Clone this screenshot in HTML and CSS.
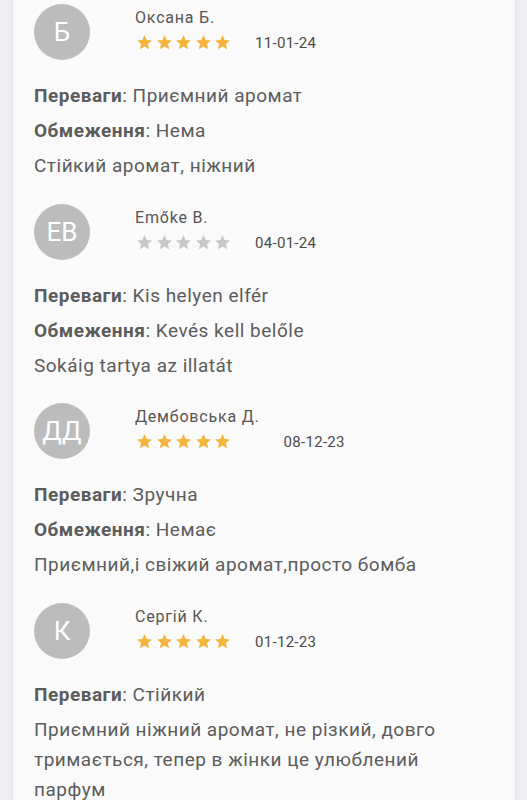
FILE: index.html
```html
<!DOCTYPE html>
<html lang="uk">
<head>
<meta charset="utf-8">
<link rel="stylesheet" href="styles.css">
</head>
<body>
<div class="card">
  <div class="review">
    <div class="head">
      <div class="avatar">Б</div>
      <div class="meta">
        <div class="name">Оксана Б.</div>
        <div class="stars gold">
          <svg viewBox="0 0 24 24"><path d="M12 1.5l3.1 6.9 7.4.7-5.6 5 1.6 7.4L12 17.7l-6.5 3.8 1.6-7.4-5.6-5 7.4-.7z"/></svg>
          <svg viewBox="0 0 24 24"><path d="M12 1.5l3.1 6.9 7.4.7-5.6 5 1.6 7.4L12 17.7l-6.5 3.8 1.6-7.4-5.6-5 7.4-.7z"/></svg>
          <svg viewBox="0 0 24 24"><path d="M12 1.5l3.1 6.9 7.4.7-5.6 5 1.6 7.4L12 17.7l-6.5 3.8 1.6-7.4-5.6-5 7.4-.7z"/></svg>
          <svg viewBox="0 0 24 24"><path d="M12 1.5l3.1 6.9 7.4.7-5.6 5 1.6 7.4L12 17.7l-6.5 3.8 1.6-7.4-5.6-5 7.4-.7z"/></svg>
          <svg viewBox="0 0 24 24"><path d="M12 1.5l3.1 6.9 7.4.7-5.6 5 1.6 7.4L12 17.7l-6.5 3.8 1.6-7.4-5.6-5 7.4-.7z"/></svg>
        </div>
      </div>
      <div class="date">11-01-24</div>
    </div>
    <p><b>Переваги</b>: Приємний аромат</p>
    <p><b>Обмеження</b>: Нема</p>
    <p>Стійкий аромат, ніжний</p>
  </div>

  <div class="review">
    <div class="head">
      <div class="avatar">EB</div>
      <div class="meta">
        <div class="name">Emőke B.</div>
        <div class="stars grey">
          <svg viewBox="0 0 24 24"><path d="M12 1.5l3.1 6.9 7.4.7-5.6 5 1.6 7.4L12 17.7l-6.5 3.8 1.6-7.4-5.6-5 7.4-.7z"/></svg>
          <svg viewBox="0 0 24 24"><path d="M12 1.5l3.1 6.9 7.4.7-5.6 5 1.6 7.4L12 17.7l-6.5 3.8 1.6-7.4-5.6-5 7.4-.7z"/></svg>
          <svg viewBox="0 0 24 24"><path d="M12 1.5l3.1 6.9 7.4.7-5.6 5 1.6 7.4L12 17.7l-6.5 3.8 1.6-7.4-5.6-5 7.4-.7z"/></svg>
          <svg viewBox="0 0 24 24"><path d="M12 1.5l3.1 6.9 7.4.7-5.6 5 1.6 7.4L12 17.7l-6.5 3.8 1.6-7.4-5.6-5 7.4-.7z"/></svg>
          <svg viewBox="0 0 24 24"><path d="M12 1.5l3.1 6.9 7.4.7-5.6 5 1.6 7.4L12 17.7l-6.5 3.8 1.6-7.4-5.6-5 7.4-.7z"/></svg>
        </div>
      </div>
      <div class="date">04-01-24</div>
    </div>
    <p><b>Переваги</b>: Kis helyen elfér</p>
    <p><b>Обмеження</b>: Kevés kell belőle</p>
    <p>Sokáig tartya az illatát</p>
  </div>

  <div class="review">
    <div class="head">
      <div class="avatar">ДД</div>
      <div class="meta">
        <div class="name">Дембовська Д.</div>
        <div class="stars gold">
          <svg viewBox="0 0 24 24"><path d="M12 1.5l3.1 6.9 7.4.7-5.6 5 1.6 7.4L12 17.7l-6.5 3.8 1.6-7.4-5.6-5 7.4-.7z"/></svg>
          <svg viewBox="0 0 24 24"><path d="M12 1.5l3.1 6.9 7.4.7-5.6 5 1.6 7.4L12 17.7l-6.5 3.8 1.6-7.4-5.6-5 7.4-.7z"/></svg>
          <svg viewBox="0 0 24 24"><path d="M12 1.5l3.1 6.9 7.4.7-5.6 5 1.6 7.4L12 17.7l-6.5 3.8 1.6-7.4-5.6-5 7.4-.7z"/></svg>
          <svg viewBox="0 0 24 24"><path d="M12 1.5l3.1 6.9 7.4.7-5.6 5 1.6 7.4L12 17.7l-6.5 3.8 1.6-7.4-5.6-5 7.4-.7z"/></svg>
          <svg viewBox="0 0 24 24"><path d="M12 1.5l3.1 6.9 7.4.7-5.6 5 1.6 7.4L12 17.7l-6.5 3.8 1.6-7.4-5.6-5 7.4-.7z"/></svg>
        </div>
      </div>
      <div class="date">08-12-23</div>
    </div>
    <p><b>Переваги</b>: Зручна</p>
    <p><b>Обмеження</b>: Немає</p>
    <p>Приємний,і свіжий аромат,просто бомба</p>
  </div>

  <div class="review">
    <div class="head">
      <div class="avatar">К</div>
      <div class="meta">
        <div class="name">Сергій К.</div>
        <div class="stars gold">
          <svg viewBox="0 0 24 24"><path d="M12 1.5l3.1 6.9 7.4.7-5.6 5 1.6 7.4L12 17.7l-6.5 3.8 1.6-7.4-5.6-5 7.4-.7z"/></svg>
          <svg viewBox="0 0 24 24"><path d="M12 1.5l3.1 6.9 7.4.7-5.6 5 1.6 7.4L12 17.7l-6.5 3.8 1.6-7.4-5.6-5 7.4-.7z"/></svg>
          <svg viewBox="0 0 24 24"><path d="M12 1.5l3.1 6.9 7.4.7-5.6 5 1.6 7.4L12 17.7l-6.5 3.8 1.6-7.4-5.6-5 7.4-.7z"/></svg>
          <svg viewBox="0 0 24 24"><path d="M12 1.5l3.1 6.9 7.4.7-5.6 5 1.6 7.4L12 17.7l-6.5 3.8 1.6-7.4-5.6-5 7.4-.7z"/></svg>
          <svg viewBox="0 0 24 24"><path d="M12 1.5l3.1 6.9 7.4.7-5.6 5 1.6 7.4L12 17.7l-6.5 3.8 1.6-7.4-5.6-5 7.4-.7z"/></svg>
        </div>
      </div>
      <div class="date">01-12-23</div>
    </div>
    <p><b>Переваги</b>: Стійкий</p>
    <p>Приємний ніжний аромат, не різкий, довго тримається, тепер в жінки це улюблений парфум</p>
  </div>
</div>
</body>
</html>
```

FILE: styles.css
```css
html, body {
  margin: 0;
  padding: 0;
  background: #eceef3;
  font-family: Roboto, "Noto Sans", sans-serif;
  color: #5c5c5c;
}

.card {
  margin: 0 11px 0 12px;
  background: #fafafa;
  border-left: 1px solid #e2e2e5;
  border-right: 1px solid #e2e2e5;
  padding: 4px 40px 0 21px;
  min-height: 800px;
  box-sizing: border-box;
  display: flex;
  flex-direction: column;
  gap: 22.5px;
}

.review {
  display: flex;
  flex-direction: column;
}

.head {
  display: flex;
  align-items: flex-start;
  margin-bottom: 21px;
}

.avatar {
  width: 56px;
  height: 56px;
  border-radius: 50%;
  background: #bcbcbc;
  color: #fff;
  font-size: 26px;
  display: flex;
  align-items: center;
  justify-content: center;
  flex: none;
}

.meta {
  margin-left: 45px;
  padding-top: 4px;
  display: flex;
  flex-direction: column;
  gap: 4.5px;
}

.name {
  font-size: 16px;
  line-height: 20px;
  letter-spacing: 0.8px;
  color: #555;
}

.stars {
  display: flex;
  gap: 2.5px;
  height: 20px;
  align-items: center;
  margin-left: 1px;
}

.stars svg {
  width: 17px;
  height: 17px;
  display: block;
}

.gold svg { fill: #f4b53f; }
.grey svg { fill: #c8c8c8; }

.date {
  margin-left: 24px;
  margin-top: 29px;
  font-size: 15px;
  line-height: 20px;
  letter-spacing: 0.3px;
  color: #4a4a4a;
}

.review p {
  margin: 0 0 5px;
  font-size: 19px;
  line-height: 30px;
  letter-spacing: 0.5px;
}

.review p:last-child {
  margin-bottom: 0;
}

.review b {
  font-weight: 700;
  color: #5c5c5c;
}
```
